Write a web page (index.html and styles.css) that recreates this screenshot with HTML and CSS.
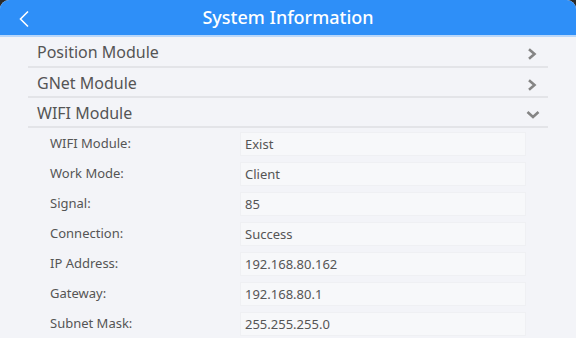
FILE: index.html
```html
<!DOCTYPE html>
<html>
<head>
<meta charset="utf-8">
<link rel="stylesheet" href="styles.css">
</head>
<body>
<div class="screen">
  <header class="topbar">
    <svg class="back" width="12" height="18" viewBox="0 0 12 18"><path d="M10 1.5 L2.5 9 L10 16.5" fill="none" stroke="#fff" stroke-width="1.6"/></svg>
    <h1 class="title">System Information</h1>
  </header>
  <main class="content">
    <div class="section">
      <span class="section-name">Position Module</span>
      <svg class="chev" width="10" height="12" viewBox="0 0 10 12"><path d="M2 1.2 L7.5 6 L2 10.8" fill="none" stroke="#858585" stroke-width="2.6"/></svg>
    </div>
    <div class="section">
      <span class="section-name">GNet Module</span>
      <svg class="chev" width="10" height="12" viewBox="0 0 10 12"><path d="M2 1.2 L7.5 6 L2 10.8" fill="none" stroke="#858585" stroke-width="2.6"/></svg>
    </div>
    <div class="section">
      <span class="section-name">WIFI Module</span>
      <svg class="chev down" width="14" height="10" viewBox="0 0 14 10"><path d="M1.5 2 L7 7 L12.5 2" fill="none" stroke="#858585" stroke-width="2.6"/></svg>
    </div>
    <div class="details">
      <div class="row"><span class="label">WIFI Module:</span><span class="value">Exist</span></div>
      <div class="row"><span class="label">Work Mode:</span><span class="value">Client</span></div>
      <div class="row"><span class="label">Signal:</span><span class="value">85</span></div>
      <div class="row"><span class="label">Connection:</span><span class="value">Success</span></div>
      <div class="row"><span class="label">IP Address:</span><span class="value">192.168.80.162</span></div>
      <div class="row"><span class="label">Gateway:</span><span class="value">192.168.80.1</span></div>
      <div class="row"><span class="label">Subnet Mask:</span><span class="value">255.255.255.0</span></div>
    </div>
  </main>
</div>
</body>
</html>
```

FILE: styles.css
```css
html, body {
  margin: 0;
  padding: 0;
  background: #2a2a2a;
  height: 100%;
  overflow: hidden;
}
body {
  font-family: "Noto Sans", "Open Sans", sans-serif;
}
.screen {
  width: 576px;
  height: 338px;
  background: #f3f4f8;
  border-radius: 9px 9px 0 0;
  overflow: hidden;
}
.topbar {
  height: 35px;
  background: #2e8ff8;
  border-bottom: 2px solid #b9d7fa;
  display: flex;
  align-items: center;
  justify-content: center;
  position: relative;
}
.back {
  position: absolute;
  left: 18px;
  top: 10px;
}
.title {
  margin: 0;
  color: #fff;
  font-size: 18px;
  font-weight: 500;
  line-height: 35px;
}
.content {
  padding: 0 28px;
}
.section {
  height: 28px;
  border-bottom: 2px solid #e3e4e8;
  display: flex;
  align-items: center;
  justify-content: space-between;
  padding: 0 11px 0 9px;
}
.section:first-child {
  height: 29px;
}
.section-name {
  font-size: 16px;
  color: #555;
  margin-top: 1px;
}
.chev {
  margin-top: 5px;
}
.chev.down {
  margin-right: -3px;
  margin-top: 6px;
}
.details {
  padding: 4px 0 2px 22px;
  display: flex;
  flex-direction: column;
  gap: 6px;
  border-bottom: 2px solid #e3e4e8;
}
.row {
  display: flex;
  align-items: center;
  height: 24px;
}
.label {
  width: 190px;
  font-size: 13px;
  color: #555;
  margin-top: -2px;
}
.value {
  width: 280px;
  height: 22px;
  box-sizing: content-box;
  background: #f7f8fa;
  border: 1px solid #eff0f3;
  font-size: 13px;
  color: #555;
  padding-left: 4px;
  display: flex;
  align-items: center;
}
```
